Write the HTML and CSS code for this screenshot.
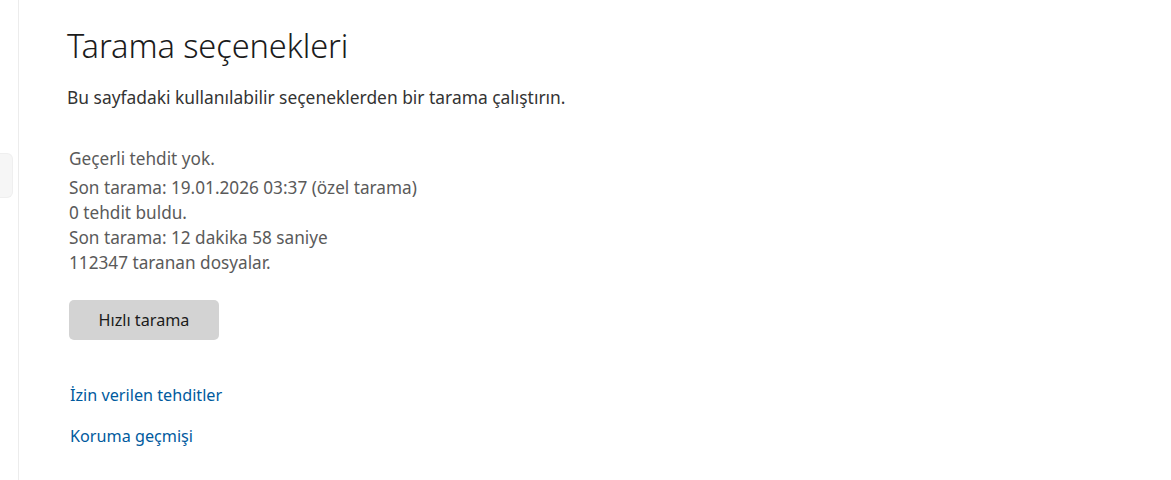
FILE: index.html
```html
<!DOCTYPE html>
<html lang="tr">
<head>
<meta charset="utf-8">
<title>Tarama seçenekleri</title>
<link rel="stylesheet" href="styles.css">
</head>
<body>
<div class="layout">
  <aside class="nav">
    <div class="nav-item"></div>
  </aside>
  <main class="content">
    <h1 class="title">Tarama seçenekleri</h1>
    <p class="subtitle">Bu sayfadaki kullanılabilir seçeneklerden bir tarama çalıştırın.</p>
    <div class="status">
      <p class="status-head">Geçerli tehdit yok.</p>
      <p class="status-line">Son tarama: 19.01.2026 03:37 (özel tarama)</p>
      <p class="status-line">0 tehdit buldu.</p>
      <p class="status-line">Son tarama: 12 dakika 58 saniye</p>
      <p class="status-line">112347 taranan dosyalar.</p>
    </div>
    <button class="btn" type="button">Hızlı tarama</button>
    <div class="links">
      <a class="link" href="#">İzin verilen tehditler</a>
      <a class="link" href="#">Koruma geçmişi</a>
    </div>
  </main>
</div>
</body>
</html>
```
FILE: styles.css
```css
* { box-sizing: border-box; }
html, body { margin: 0; padding: 0; background: #ffffff; }
body {
  font-family: "Noto Sans", "Open Sans", sans-serif;
  color: #1b1b1b;
  width: 1171px;
  height: 480px;
  overflow: hidden;
}
.layout { display: flex; height: 480px; }
.nav {
  width: 19px;
  flex: 0 0 19px;
  border-right: 1px solid #ececec;
  padding-top: 153px;
}
.nav-item {
  width: 13px;
  height: 45px;
  background: #f6f6f6;
  border: 1px solid #efefef;
  border-left: none;
  border-radius: 0 6px 6px 0;
}
.content {
  padding-left: 48px;
  padding-top: 24px;
  display: flex;
  flex-direction: column;
  align-items: flex-start;
}
.title {
  margin: 0;
  font-size: 32.6px;
  font-weight: 300;
  line-height: 44px;
  color: #1b1b1b;
  letter-spacing: -0.1px;
}
.subtitle {
  margin: 17px 0 0 0;
  font-size: 17.4px;
  line-height: 24px;
  color: #333333;
}
.status {
  margin-top: 37px;
  padding-left: 2px;
  color: #5a5a5a;
  font-size: 17.2px;
}
.status p { margin: 0; line-height: 25px; }
.status-head { margin-bottom: 4px !important; }
.btn {
  margin-top: 25px;
  margin-left: 2px;
  width: 150px;
  height: 40px;
  border: none;
  border-radius: 5px;
  background: #d3d3d3;
  color: #1b1b1b;
  font-family: inherit;
  font-size: 16.2px;
  padding: 0;
}
.links {
  margin-top: 43px;
  margin-left: 3px;
  display: flex;
  flex-direction: column;
  gap: 17px;
}
.link {
  color: #005a9e;
  text-decoration: none;
  font-size: 16.2px;
  line-height: 24px;
}
```
